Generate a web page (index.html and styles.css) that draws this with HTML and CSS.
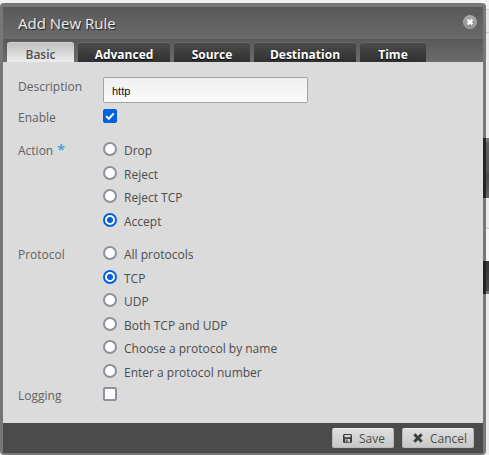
FILE: index.html
```html
<!DOCTYPE html>
<html lang="en">
<head>
<meta charset="utf-8">
<title>Add New Rule</title>
<link rel="stylesheet" href="styles.css">
</head>
<body>
<div class="page-edge"></div>
<div class="dialog">
  <header class="titlebar">
    <h1>Add New Rule</h1>
    <svg class="close" viewBox="0 0 14 14"><defs><linearGradient id="g" x1="0" y1="0" x2="0" y2="1"><stop offset="0" stop-color="#aaa"/><stop offset="1" stop-color="#8c8c8c"/></linearGradient></defs><circle cx="7" cy="7" r="6.6" fill="url(#g)" stroke="#b5b5b5" stroke-width=".7"/><path d="M4.6 4.6l4.8 4.8M9.4 4.6L4.6 9.4" stroke="#fff" stroke-width="2.2"/></svg>
  </header>
  <nav class="tabs">
    <div class="tab active basic">Basic</div>
    <div class="tab advanced">Advanced</div>
    <div class="tab source">Source</div>
    <div class="tab destination">Destination</div>
    <div class="tab time">Time</div>
  </nav>
  <main class="form">
    <div class="row description"><span class="label">Description</span><div class="input">http</div></div>
    <div class="row enable"><span class="label">Enable</span><span class="check on"><svg viewBox="0 0 14 14"><path d="M3.2 7.2l2.6 2.6 5-5.4" fill="none" stroke="#fff" stroke-width="2"/></svg></span></div>
    <div class="row action"><span class="label">Action <b>*</b></span>
      <div class="options">
        <div class="option"><i class="radio"></i>Drop</div>
        <div class="option"><i class="radio"></i>Reject</div>
        <div class="option"><i class="radio"></i>Reject TCP</div>
        <div class="option"><i class="radio on"></i>Accept</div>
      </div>
    </div>
    <div class="row protocol"><span class="label">Protocol</span>
      <div class="options">
        <div class="option"><i class="radio"></i>All protocols</div>
        <div class="option"><i class="radio on"></i>TCP</div>
        <div class="option"><i class="radio"></i>UDP</div>
        <div class="option"><i class="radio"></i>Both TCP and UDP</div>
        <div class="option"><i class="radio"></i>Choose a protocol by name</div>
        <div class="option"><i class="radio"></i>Enter a protocol number</div>
      </div>
    </div>
    <div class="row"><span class="label">Logging</span><span class="check"></span></div>
  </main>
  <footer class="footer">
    <div class="button save"><svg width="9" height="9" viewBox="0 0 9 9"><path fill="#3e3e3e" fill-rule="evenodd" d="M1 0h7l1 1v7L8 9H1L0 8V1zM1.5 1v2.2h6V1zM2.2 5v3.2h4.8V5z"/><path fill="#3e3e3e" d="M3.2 5.6h1.4v2.6H3.2z"/></svg>Save</div>
    <div class="button cancel"><svg width="10" height="10" viewBox="0 0 10 10"><path d="M1.3 1.3l7.4 7.4M8.7 1.3L1.3 8.7" stroke="#3e3e3e" stroke-width="3"/></svg>Cancel</div>
  </footer>
</div>
</body>
</html>
```
FILE: styles.css
```css
* { box-sizing: border-box; }
html, body { height: 100%; }
body {
  margin: 0;
  position: relative;
  overflow: hidden;
  background: #f2f2f2;
  font: 12px/17px "Open Sans", "Noto Sans", sans-serif;
  color: #4c4c4c;
}
.page-edge {
  position: absolute;
  inset: 0;
  background: linear-gradient(#f2f2f2 9px, #ccc 9px, #ccc 10px, #e6e6e6 10px, #e6e6e6 32px, #c8c8c8 32px, #c8c8c8 33px, #ebebeb 33px, #ebebeb 138px, #777 138px, #777 142px, #626262 142px, #565656 173px, #4b4b4b 174px, #636363 198px, #ececec 198px, #ececec 228px, #ccc 228px, #ccc 229px, #f6f6f6 229px, #f6f6f6 261px, #333 261px, #4b4b4b 291px, #777 291px, #777 294px, #ebebeb 294px);
}
.dialog {
  position: relative;
  width: 486px;
  height: 455px;
  padding: 7px 3px 2px;
  background: linear-gradient(90deg, transparent 483px, #777 483px) 0 0 / 100% 138px no-repeat,
    linear-gradient(90deg, transparent 483px, #252525 483px) 0 138px / 100% 60px no-repeat,
    linear-gradient(90deg, transparent 483px, #222 483px) 0 261px / 100% 33px no-repeat,
    #777;
  border-radius: 4px;
  clip-path: inset(3px 0 0 0 round 4px);
}
.titlebar {
  height: 32px;
  padding: 0 6px 0 15px;
  display: flex;
  align-items: center;
  justify-content: space-between;
  background: linear-gradient(#595959, #6a6a6a);
}
.titlebar h1 {
  margin: 0;
  font-size: 15px;
  line-height: 20px;
  font-weight: 400;
  color: #eee;
  text-shadow: 1px 1px 1px #222;
}
.close { width: 14px; height: 14px; margin-top: -2px; }
.tabs {
  height: 23px;
  padding: 3px 4px 0;
  display: flex;
  gap: 4px;
  background: linear-gradient(#595959, #6c6c6c);
}
.tab {
  height: 20px;
  line-height: 23px;
  text-align: center;
  font-weight: 700;
  color: #fff;
  text-shadow: 0 1px 1px #000;
  background: linear-gradient(#4b4b4b, #303030);
  border-top: 1px solid #666;
  border-radius: 3px 3px 0 0;
}
.tab.active {
  font-weight: 600;
  color: #505050;
  text-shadow: none;
  background: linear-gradient(#c0c0c0, #eee);
  border-color: #d5d5d5;
}
.basic { width: 67px; }
.advanced { width: 92px; }
.source { width: 76px; }
.destination { width: 102px; }
.time { width: 66px; }
.form {
  height: 361px;
  padding: 15px 15px 0;
  background: #dbdbdb;
}
.row { display: grid; grid-template-columns: 85px 1fr; align-items: start; }
.label { color: #626262; line-height: 17px; }
.label b { color: #4ba3d3; font-size: 14px; line-height: 1; margin-left: 1px; }
.description { height: 32px; }
.description .label { padding-top: 1px; }
.input {
  width: 205px;
  height: 26px;
  padding-left: 8px;
  border: 1px solid #a3a3a3;
  border-radius: 2px;
  background: linear-gradient(#f0f0f0, #fafafa);
  font: 11px/26px "Liberation Sans", sans-serif;
  color: #111;
}
.enable { height: 33px; }
.action { height: 104px; }
.protocol { height: 141px; }
.option { display: flex; gap: 7px; height: 23.5px; line-height: 17px; }
.radio {
  flex: none;
  width: 14px;
  height: 14px;
  border: 2px solid #8f8f9d;
  border-radius: 50%;
  background: #fff;
}
.radio.on { border-color: #0060df; background: radial-gradient(circle, #0060df 2.7px, #fff 3.3px); }
.check {
  width: 14px;
  height: 14px;
  border: 2px solid #8f8f9d;
  border-radius: 2px;
  background: #fff;
}
.check.on { border: 0; background: #0060df; }
.check svg { display: block; }
.footer {
  height: 30px;
  padding: 5px 9px 0;
  display: flex;
  justify-content: flex-end;
  gap: 8px;
  background: #4b4b4b;
}
.button {
  height: 20px;
  display: flex;
  align-items: center;
  padding-left: 10px;
  gap: 7px;
  border: 1px solid #bbb;
  border-top-color: #eee;
  border-radius: 2px;
  background: linear-gradient(#dedede, #c8c8c8);
}
.save { width: 62px; }
.cancel { width: 72px; }
```
